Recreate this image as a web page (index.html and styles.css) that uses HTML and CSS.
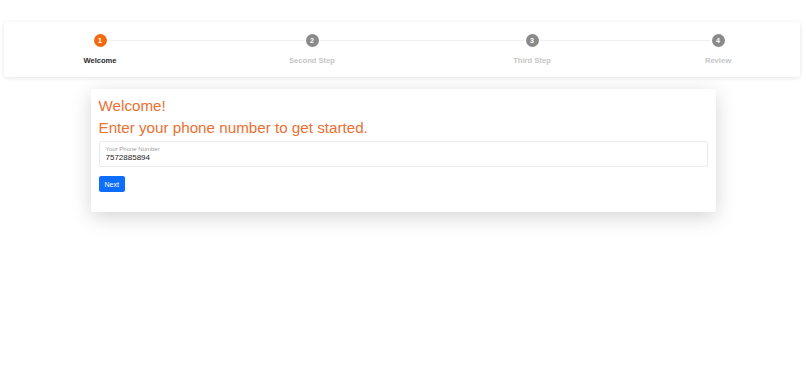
FILE: index.html
```
<!DOCTYPE html>
<html lang="en">
<head>
    <meta charset="UTF-8">
    <meta name="viewport" content="width=device-width, initial-scale=1.0">
    <title>Welcome</title>
    <link rel="stylesheet" href="styles.css">
</head>
<body>
    <!-- Шаги -->
    <div class="stepper">
        <div class="step active">
            <span class="step-icon">1</span>
            <span class="step-label">Welcome</span>
        </div>
        <div class="step">
            <span class="step-icon">2</span>
            <span class="step-label">Second Step</span>
        </div>
        <div class="step">
            <span class="step-icon">3</span>
            <span class="step-label">Third Step</span>
        </div>
        <div class="step">
            <span class="step-icon">4</span>
            <span class="step-label">Review</span>
        </div>
    </div>

    <div class="form-card">
        <h2 class="title">Welcome!</h2>
        <h2 class="title">Enter your phone number to get started.</h2>
        <div class="field">
            <label class="field-label" for="phone">Your Phone Number</label>
            <input class="field-input" id="phone" type="text" value="7572885894">
        </div>
        <button class="btn-next" type="button">Next</button>
    </div>
</body>
</html>
```

FILE: styles.css
```
html,
body {
    min-height: 100%;
}

body {
    margin: 0;
    padding-bottom: 160px;
    background-color: #fff;
    font-family: "Liberation Sans", Arial, sans-serif;
    color: #222;
}

.stepper {
    display: grid;
    grid-template-columns: 192fr 232fr 208fr 164fr;
    margin: 22px 6px 0 4px;
    padding: 12px 0 12px;
    background-color: #fff;
    border-radius: 3px;
    box-shadow: 0 1px 4px rgba(0, 0, 0, 0.11);
}

.step {
    position: relative;
    display: flex;
    flex-direction: column;
    align-items: center;
}

/* линии между кружками */
.step::before,
.step::after {
    content: "";
    position: absolute;
    top: 6px;
    height: 1px;
    background-color: #f0f0f0;
}

.step::before {
    left: 0;
    right: calc(50% + 8px);
}

.step::after {
    left: calc(50% + 8px);
    right: 0;
}

.step:first-child::before,
.step:last-child::after {
    display: none;
}

.step-icon {
    width: 13px;
    height: 13px;
    border-radius: 50%;
    background-color: #8a8a8a;
    color: #fff;
    font-size: 7px;
    font-weight: bold;
    line-height: 13px;
    text-align: center;
}

.step-label {
    margin-top: 9px;
    font-size: 7.6px;
    font-weight: bold;
    line-height: 9px;
    color: #c6c6c6;
}

.step.active .step-icon {
    background-color: #f26a10;
}

.step.active .step-label {
    color: #2b2b2b;
}

.form-card {
    width: 609px;
    margin: 12px auto 0;
    padding: 8px 8px 20px;
    background-color: #fff;
    border-radius: 2px;
    box-shadow: 0 5px 20px rgba(0, 0, 0, 0.17);
}

.title {
    margin: 0 0 4px;
    font-size: 15.2px;
    font-weight: normal;
    line-height: 18px;
    color: #ea7033;
}

.field {
    display: flex;
    flex-direction: column;
    height: 26px;
    box-sizing: border-box;
    padding: 4px 6px 0;
    border: 1px solid #ebebeb;
    border-radius: 2px;
}

.field-label {
    font-size: 6px;
    line-height: 7px;
    color: #a0a0a0;
}

.field-input {
    padding: 0;
    border: none;
    outline: none;
    font-family: inherit;
    font-size: 8px;
    line-height: 10px;
    color: #222;
    background: transparent;
}

.btn-next {
    margin-top: 9px;
    height: 16px;
    padding: 0 6px;
    border: none;
    border-radius: 2px;
    background-color: #0d6efd;
    color: #fff;
    font-family: inherit;
    font-size: 7px;
    cursor: pointer;
}
```
